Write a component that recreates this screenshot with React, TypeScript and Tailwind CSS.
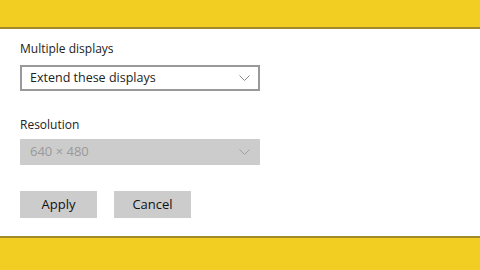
import React from 'react';

const Chevron: React.FC<{ color: string }> = ({ color }) => (
    <svg width="11" height="6" viewBox="0 0 11 6" fill="none">
        <path d="M0.5 0.5l5 5 5-5" stroke={color} strokeWidth="1" />
    </svg>
);

const App: React.FC = () => {
    return (
        <div
            className="w-[480px] h-[270px] flex flex-col bg-white overflow-hidden"
            style={{ fontFamily: '"Open Sans", "Noto Sans", sans-serif' }}
        >
            <div className="h-[27px] bg-[#f2cd22] shrink-0" />
            <div className="h-[2px] bg-[#a08a2a] shrink-0" />
            <div className="flex-1 flex flex-col px-5 pt-[12px]">
                <div className="text-[12px] leading-[16px] text-[#222]">Multiple displays</div>
                <div className="mt-[8px] w-[240px] h-[26px] border-2 border-[#999] flex items-center justify-between pl-[8px] pr-[8px]">
                    <span className="text-[12.5px] text-[#222]">Extend these displays</span>
                    <Chevron color="#888" />
                </div>
                <div className="mt-[26px] text-[12px] leading-[16px] text-[#222]">Resolution</div>
                <div className="mt-[6px] w-[240px] h-[26px] bg-[#cccccc] flex items-center justify-between pl-[10px] pr-[10px]">
                    <span className="text-[13px] text-[#9a9a9a]">640 × 480</span>
                    <Chevron color="#a0a0a0" />
                </div>
                <div className="mt-[26px] flex gap-[17px]">
                    <button className="w-[77px] h-[27px] bg-[#cccccc] text-[13px] text-[#111]">Apply</button>
                    <button className="w-[77px] h-[27px] bg-[#cccccc] text-[13px] text-[#111]">Cancel</button>
                </div>
            </div>
            <div className="h-[2px] bg-[#a08a2a] shrink-0" />
            <div className="h-[32px] bg-[#f2cd22] shrink-0" />
        </div>
    );
};

export default App;
